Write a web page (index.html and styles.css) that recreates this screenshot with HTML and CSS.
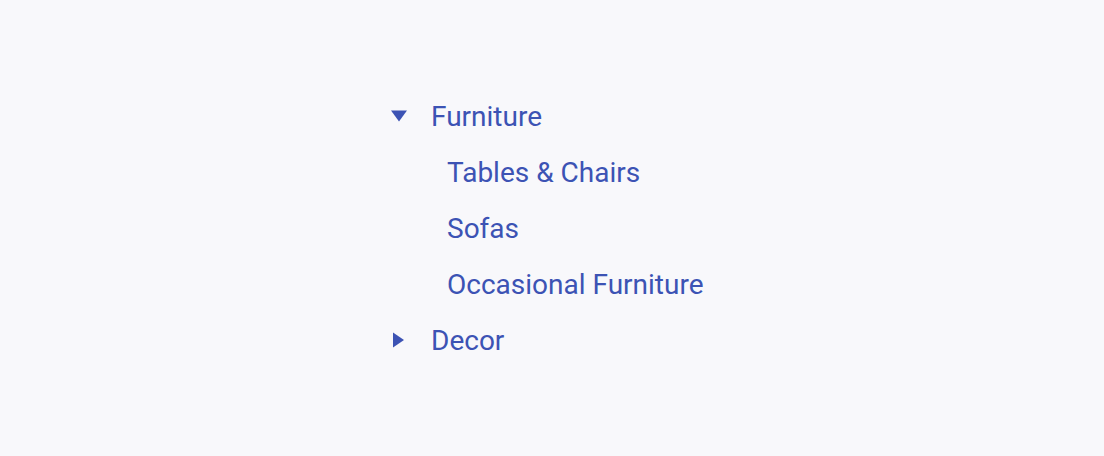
FILE: index.html
```html
<!DOCTYPE html>
<html>
<head>
<meta charset="utf-8">
<link rel="stylesheet" href="styles.css">
</head>
<body>
<ul class="tree">
  <li class="node">
    <div class="row">
      <span class="toggle"><svg width="16" height="16" viewBox="0 0 16 16"><path d="M0 2.5 H16 L8 13.5 Z" fill="currentColor"/></svg></span>
      <span class="label">Furniture</span>
    </div>
    <ul class="children">
      <li class="row leaf"><span class="label">Tables &amp; Chairs</span></li>
      <li class="row leaf"><span class="label">Sofas</span></li>
      <li class="row leaf"><span class="label">Occasional Furniture</span></li>
    </ul>
  </li>
  <li class="node">
    <div class="row">
      <span class="toggle"><svg width="16" height="16" viewBox="0 0 16 16"><path d="M2 0.5 V15.5 L13 8 Z" fill="currentColor"/></svg></span>
      <span class="label">Decor</span>
    </div>
  </li>
</ul>
</body>
</html>
```
FILE: styles.css
```css
html, body {
  margin: 0;
  padding: 0;
  background: #f8f8fb;
  height: 100%;
}
body {
  font-family: Roboto, "Liberation Sans", sans-serif;
  color: #3c53b4;
  display: flex;
  justify-content: center;
  padding-top: 88px;
  box-sizing: border-box;
}
.tree, .children {
  list-style: none;
  margin: 0;
  padding: 0;
}
.tree {
  width: 336px;
}
.row {
  height: 56px;
  display: flex;
  align-items: center;
  font-size: 28px;
}
.toggle {
  width: 47px;
  height: 24px;
  display: flex;
  align-items: center;
  padding-left: 7px;
  box-sizing: border-box;
}
.toggle svg { display: block; }
.leaf {
  padding-left: 63px;
}
```
